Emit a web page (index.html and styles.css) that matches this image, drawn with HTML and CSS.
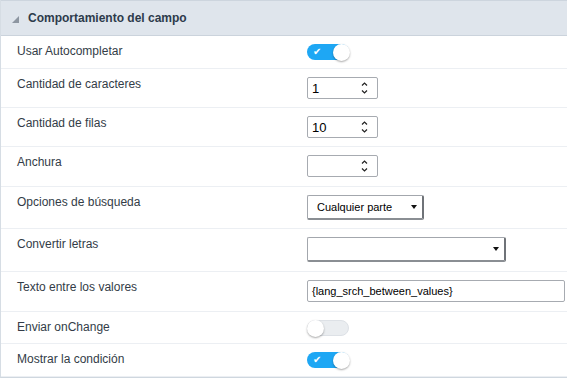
FILE: index.html
```html
<!DOCTYPE html>
<html lang="es">
<head>
    <meta charset="UTF-8">
    <meta name="viewport" content="width=device-width, initial-scale=1.0">
    <title>Comportamiento del campo</title>
    <link rel="stylesheet" href="styles.css">
</head>
<body>
    <div class="panel">
        <div class="panel-head">
            <span class="caret"></span>
            <span class="panel-title">Comportamiento del campo</span>
        </div>

        <div class="row row-switch">
            <div class="label">Usar Autocompletar</div>
            <div class="field">
                <span class="switch on"><span class="check">&#10004;</span><span class="knob"></span></span>
            </div>
        </div>

        <div class="row row-input">
            <div class="label">Cantidad de caracteres</div>
            <div class="field">
                <div class="num"><span class="num-val">1</span><span class="spin"><svg width="7" height="14" viewBox="0 0 7 14"><path d="M1 4.5 L3.5 2 L6 4.5" fill="none" stroke="#222" stroke-width="1.2"/><path d="M1 9.5 L3.5 12 L6 9.5" fill="none" stroke="#222" stroke-width="1.2"/></svg></span></div>
            </div>
        </div>

        <div class="row row-input">
            <div class="label">Cantidad de filas</div>
            <div class="field">
                <div class="num"><span class="num-val">10</span><span class="spin"><svg width="7" height="14" viewBox="0 0 7 14"><path d="M1 4.5 L3.5 2 L6 4.5" fill="none" stroke="#222" stroke-width="1.2"/><path d="M1 9.5 L3.5 12 L6 9.5" fill="none" stroke="#222" stroke-width="1.2"/></svg></span></div>
            </div>
        </div>

        <div class="row row-input row-tall">
            <div class="label">Anchura</div>
            <div class="field">
                <div class="num"><span class="num-val"></span><span class="spin"><svg width="7" height="14" viewBox="0 0 7 14"><path d="M1 4.5 L3.5 2 L6 4.5" fill="none" stroke="#222" stroke-width="1.2"/><path d="M1 9.5 L3.5 12 L6 9.5" fill="none" stroke="#222" stroke-width="1.2"/></svg></span></div>
            </div>
        </div>

        <div class="row row-select">
            <div class="label">Opciones de búsqueda</div>
            <div class="field">
                <div class="select select-short"><span class="select-val">Cualquier parte</span><span class="arrow"></span></div>
            </div>
        </div>

        <div class="row row-select2">
            <div class="label">Convertir letras</div>
            <div class="field">
                <div class="select select-wide"><span class="select-val"></span><span class="arrow"></span></div>
            </div>
        </div>

        <div class="row row-text">
            <div class="label">Texto entre los valores</div>
            <div class="field">
                <div class="text-input">{lang_srch_between_values}</div>
            </div>
        </div>

        <div class="row row-switch row-short">
            <div class="label">Enviar onChange</div>
            <div class="field">
                <span class="switch off"><span class="knob"></span></span>
            </div>
        </div>

        <div class="row row-switch">
            <div class="label">Mostrar la condición</div>
            <div class="field">
                <span class="switch on"><span class="check">&#10004;</span><span class="knob"></span></span>
            </div>
        </div>
    </div>
</body>
</html>
```

FILE: styles.css
```css
body {
    margin: 0;
    font-family: "Liberation Sans", Arial, sans-serif;
    font-size: 12px;
    color: #333c47;
    background: #fff;
}
.panel {
    border-left: 1px solid #d6dde4;
    border-bottom: 1px solid #cfd7df;
}
.panel-head {
    height: 34px;
    display: flex;
    align-items: center;
    background-color: #dfe5ec;
    border-top: 1px solid #cdd5de;
    border-bottom: 1px solid #cbd3dc;
    padding-left: 11px;
}
.caret {
    width: 0;
    height: 0;
    border-left: 7px solid transparent;
    border-bottom: 7px solid #8d96a1;
    margin-right: 9px;
    margin-top: 2px;
}
.panel-title {
    font-weight: bold;
    font-size: 12px;
    color: #2d3b4b;
}
.row {
    display: flex;
    align-items: flex-start;
    border-bottom: 1px solid #eceff3;
}
.label {
    width: 306px;
    padding: 8px 0 0 16px;
    line-height: 15px;
    box-sizing: border-box;
}
.field {
    padding-top: 8px;
}
.row-switch { height: 32px; }
.row-short { height: 31px; }
.row-input { height: 38px; }
.row-tall { height: 39px; }
.row-select { height: 41px; }
.row-select2 { height: 42px; }
.row-text { height: 39px; }

.switch {
    display: flex;
    align-items: center;
    justify-content: space-between;
    width: 42px;
    height: 16px;
    border-radius: 8px;
    box-sizing: border-box;
}
.switch.on {
    background-color: #1ea7f4;
    padding-left: 6px;
}
.switch.off {
    background-color: #eaedf0;
    border: 1px solid #dde1e6;
}
.check {
    color: #fff;
    font-size: 10px;
    line-height: 10px;
}
.knob {
    width: 17px;
    height: 17px;
    border-radius: 50%;
    background: #fff;
    box-shadow: 0 1px 2px rgba(0,0,0,0.35);
}
.switch.on .knob {
    margin-right: -1px;
}
.switch.off .knob {
    margin-left: -1px;
}

.num {
    display: flex;
    align-items: center;
    justify-content: space-between;
    width: 71px;
    height: 22px;
    border: 1px solid #a7abb1;
    border-radius: 2px;
    box-sizing: border-box;
    padding: 0 9px 0 4px;
    color: #000;
    font-size: 13px;
}
.spin {
    display: flex;
}

.select {
    display: flex;
    align-items: center;
    justify-content: space-between;
    height: 25px;
    border: 1px solid #a3a7ad;
    border-right: 2px solid #6f7378;
    border-bottom: 2px solid #8a8e93;
    border-radius: 2px;
    box-sizing: border-box;
    padding: 0 5px 0 9px;
    color: #000;
    font-size: 11px;
}
.select-short { width: 117px; }
.select-wide { width: 199px; }
.arrow {
    width: 0;
    height: 0;
    border-left: 3px solid transparent;
    border-right: 3px solid transparent;
    border-top: 4px solid #111;
}

.text-input {
    width: 258px;
    height: 22px;
    line-height: 20px;
    border: 1px solid #a7abb1;
    border-radius: 2px;
    box-sizing: border-box;
    padding-left: 4px;
    color: #000;
    font-size: 11px;
}
```
